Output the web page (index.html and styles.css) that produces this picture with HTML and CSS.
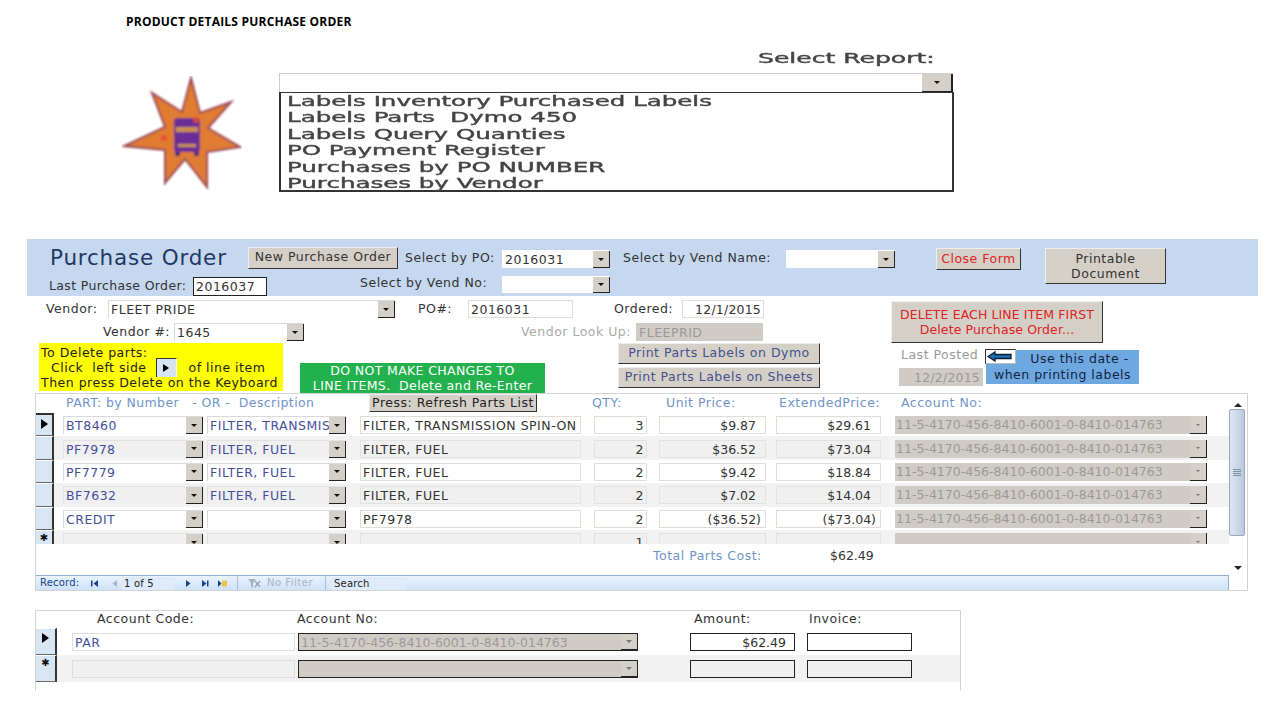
FILE: index.html
```html
<!DOCTYPE html>
<html lang="en">
<head>
<meta charset="utf-8">
<title>Product Details Purchase Order</title>
<link rel="stylesheet" href="styles.css">
</head>
<body>
<div class="page">
  <h1 class="doc-title">PRODUCT DETAILS PURCHASE ORDER</h1>

  <section class="report">
    <svg class="logo" viewBox="122 76 120 114" aria-hidden="true">
      <defs><filter id="soft" x="-10%" y="-10%" width="120%" height="120%"><feGaussianBlur stdDeviation="0.8"/></filter></defs>
      <g filter="url(#soft)">
        <polygon points="191,78 200,113 231,102 208,128 240,147 207,152 207,187 185,159 165,183 165,150 124,146 165,127 152,93 182,112" fill="#e07c30" stroke="#9c4a55" stroke-width="2" stroke-linejoin="miter"/>
        <rect x="174" y="118" width="26" height="34" rx="3" fill="#6a2f96"/>
        <rect x="176" y="127" width="22" height="5" fill="#c9904f"/>
        <rect x="178" y="144" width="18" height="3" fill="#c9904f"/>
        <rect x="175" y="152" width="5" height="4" fill="#4e2a78"/>
        <rect x="194" y="152" width="5" height="4" fill="#4e2a78"/>
        <circle cx="196" cy="120" r="3" fill="#d8483a"/>
        <circle cx="164" cy="138" r="3" fill="#e8503a"/>
      </g>
    </svg>
    <div class="report-box">
      <div class="report-label"><span>Select Report:</span></div>
      <div class="report-combo"><span class="btn"></span></div>
      <ul class="report-list">
        <li>Labels Inventory Purchased Labels</li>
        <li>Labels Parts&nbsp; Dymo 450</li>
        <li>Labels Query Quanties</li>
        <li>PO Payment Register</li>
        <li>Purchases by PO NUMBER</li>
        <li>Purchases by Vendor</li>
      </ul>
    </div>
  </section>

  <section class="band">
    <div class="band-main">
      <div class="band-row1">
        <h2 class="form-title">Purchase Order</h2>
        <button class="cmd new-po">New Purchase Order</button>
        <span class="lbl sel-po">Select by PO:</span>
        <div class="combo w-po plain"><span class="val">2016031</span><span class="btn"></span></div>
        <span class="lbl sel-name">Select by Vend Name:</span>
        <div class="combo w-name plain"><span class="val"></span><span class="btn"></span></div>
        <button class="cmd close-form">Close Form</button>
      </div>
      <div class="band-row2">
        <span class="lbl last-po">Last Purchase Order:</span>
        <div class="field last-po-val">2016037</div>
        <span class="lbl sel-no">Select by Vend No:</span>
        <div class="combo w-po vend-no plain"><span class="val"></span><span class="btn"></span></div>
      </div>
    </div>
    <button class="cmd printable">Printable<br>Document</button>
  </section>

  <section class="details">
    <div class="details-fields">
      <div class="d-row first">
        <span class="lbl l-vendor">Vendor:</span>
        <div class="combo w-vendor"><span class="val">FLEET PRIDE</span><span class="btn"></span></div>
        <span class="lbl l-po">PO#:</span>
        <div class="field w-ponum">2016031</div>
        <span class="lbl l-ordered">Ordered:</span>
        <div class="field w-ordered">12/1/2015</div>
      </div>
      <div class="d-row second">
        <span class="lbl l-vnum">Vendor #:</span>
        <div class="combo w-vnum"><span class="val">1645</span><span class="btn"></span></div>
        <span class="lbl l-look">Vendor Look Up:</span>
        <div class="field w-look">FLEEPRID</div>
      </div>
    </div>
    <button class="cmd delete-po">DELETE EACH LINE ITEM FIRST<br>Delete Purchase Order...</button>
  </section>

  <section class="notices">
    <div class="yellow">
      <div>To Delete parts:</div>
      <div class="y-mid"><span>Click&nbsp; left side</span><span class="sel-sample"><i class="arrow"></i></span><span>of line item</span></div>
      <div>Then press Delete on the Keyboard</div>
    </div>
    <div class="green">DO NOT MAKE CHANGES TO<br>LINE ITEMS.&nbsp; Delete and Re-Enter</div>
    <div class="print-btns">
      <button class="cmd print">Print Parts Labels on Dymo</button>
      <button class="cmd print">Print Parts Labels on Sheets</button>
    </div>
    <div class="posted">
      <div class="posted-col">
        <span class="lbl-gray">Last Posted</span>
        <div class="field posted-date">12/2/2015</div>
      </div>
      <div class="note">
        <div class="note-l1">Use this date -</div>
        <div>when printing labels</div>
        <div class="note-arrow">
          <svg viewBox="0 0 29 13" width="29" height="13" aria-hidden="true"><path d="M2 6.5 9 2V4.5H25V8.5H9V11Z" fill="#1f6fb0" stroke="#0c1d3a" stroke-width="1.3"/></svg>
        </div>
      </div>
    </div>
  </section>

  <section class="sub">
    <div class="sub-main">
      <div class="sub-head">
        <span class="h-part">PART: by Number&nbsp; &nbsp;- OR -&nbsp; Description</span>
        <button class="cmd refresh">Press: Refresh Parts List</button>
        <span class="h-qty">QTY:</span>
        <span class="h-unit">Unit Price:</span>
        <span class="h-ext">ExtendedPrice:</span>
        <span class="h-acct">Account No:</span>
      </div>
      <div class="rows">
        <div class="row">
          <span class="sel"><i class="arrow"></i></span>
          <div class="combo c-part"><span class="val">BT8460</span><span class="btn"></span></div>
          <div class="combo c-desc"><span class="val">FILTER, TRANSMIS</span><span class="btn"></span></div>
          <div class="field c-text">FILTER, TRANSMISSION SPIN-ON</div>
          <div class="field c-qty">3</div>
          <div class="field c-unit">$9.87</div>
          <div class="field c-ext">$29.61</div>
          <div class="combo c-acct"><span class="val">11-5-4170-456-8410-6001-0-8410-014763</span><span class="btn"></span></div>
        </div>
        <div class="row alt">
          <span class="sel"></span>
          <div class="combo c-part"><span class="val">PF7978</span><span class="btn"></span></div>
          <div class="combo c-desc"><span class="val">FILTER, FUEL</span><span class="btn"></span></div>
          <div class="field c-text">FILTER, FUEL</div>
          <div class="field c-qty">2</div>
          <div class="field c-unit">$36.52</div>
          <div class="field c-ext">$73.04</div>
          <div class="combo c-acct"><span class="val">11-5-4170-456-8410-6001-0-8410-014763</span><span class="btn"></span></div>
        </div>
        <div class="row">
          <span class="sel"></span>
          <div class="combo c-part"><span class="val">PF7779</span><span class="btn"></span></div>
          <div class="combo c-desc"><span class="val">FILTER, FUEL</span><span class="btn"></span></div>
          <div class="field c-text">FILTER, FUEL</div>
          <div class="field c-qty">2</div>
          <div class="field c-unit">$9.42</div>
          <div class="field c-ext">$18.84</div>
          <div class="combo c-acct"><span class="val">11-5-4170-456-8410-6001-0-8410-014763</span><span class="btn"></span></div>
        </div>
        <div class="row alt">
          <span class="sel"></span>
          <div class="combo c-part"><span class="val">BF7632</span><span class="btn"></span></div>
          <div class="combo c-desc"><span class="val">FILTER, FUEL</span><span class="btn"></span></div>
          <div class="field c-text">FILTER, FUEL</div>
          <div class="field c-qty">2</div>
          <div class="field c-unit">$7.02</div>
          <div class="field c-ext">$14.04</div>
          <div class="combo c-acct"><span class="val">11-5-4170-456-8410-6001-0-8410-014763</span><span class="btn"></span></div>
        </div>
        <div class="row">
          <span class="sel"></span>
          <div class="combo c-part"><span class="val">CREDIT</span><span class="btn"></span></div>
          <div class="combo c-desc"><span class="val"></span><span class="btn"></span></div>
          <div class="field c-text">PF7978</div>
          <div class="field c-qty">2</div>
          <div class="field c-unit neg">($36.52)</div>
          <div class="field c-ext neg">($73.04)</div>
          <div class="combo c-acct"><span class="val">11-5-4170-456-8410-6001-0-8410-014763</span><span class="btn"></span></div>
        </div>
        <div class="row alt">
          <span class="sel star">✱</span>
          <div class="combo c-part"><span class="val"></span><span class="btn"></span></div>
          <div class="combo c-desc"><span class="val"></span><span class="btn"></span></div>
          <div class="field c-text"></div>
          <div class="field c-qty">1</div>
          <div class="field c-unit"></div>
          <div class="field c-ext"></div>
          <div class="combo c-acct"><span class="val"></span><span class="btn"></span></div>
        </div>
      </div>
      <div class="totals">
        <span class="t-label">Total Parts Cost:</span>
        <span class="t-value">$62.49</span>
      </div>
      <div class="nav">
        <span class="nav-rec">Record:</span>
        <svg class="ni" viewBox="0 0 9 9" width="9" height="9"><path d="M1 1.5H2.5V7.5H1ZM8 1 3.5 4.5 8 8Z" fill="#15428b"/></svg>
        <svg class="ni prev" viewBox="0 0 9 9" width="9" height="9"><path d="M7 1 2.5 4.5 7 8Z" fill="#a9b4c4"/></svg>
        <span class="nav-cur">1 of 5</span>
        <svg class="ni next" viewBox="0 0 9 9" width="9" height="9"><path d="M2 1 6.5 4.5 2 8Z" fill="#15428b"/></svg>
        <svg class="ni last" viewBox="0 0 9 9" width="9" height="9"><path d="M1 1 5.5 4.5 1 8ZM6 1.5H7.5V7.5H6Z" fill="#15428b"/></svg>
        <svg class="ni add" viewBox="0 0 11 9" width="11" height="9"><path d="M1 1 4.5 4.5 1 8Z" fill="#15428b"/><rect x="5" y="1.5" width="5" height="6" fill="#f2c24a"/></svg>
        <span class="nav-sep sep1"></span>
        <svg class="ni funnel" viewBox="0 0 14 11" width="14" height="11"><path d="M1 1H9L6 5V10L4 8.5V5Z" fill="#a8b0bc"/><path d="M8 3 13 9M13 3 8 9" stroke="#9aa6b6" stroke-width="1.5"/></svg>
        <span class="nav-filter">No Filter</span>
        <span class="nav-sep sep2"></span>
        <span class="nav-search">Search</span>
      </div>
    </div>
    <div class="scroll">
      <i class="up"></i>
      <div class="thumb"><b></b></div>
      <i class="down"></i>
    </div>
  </section>

  <section class="acct">
    <div class="acct-head">
      <span class="a-code">Account Code:</span>
      <span class="a-no">Account No:</span>
      <span class="a-amt">Amount:</span>
      <span class="a-inv">Invoice:</span>
    </div>
    <div class="a-row">
      <span class="a-sel"><i class="arrow"></i></span>
      <div class="field a-f-code">PAR</div>
      <div class="combo a-f-no"><span class="val">11-5-4170-456-8410-6001-0-8410-014763</span><span class="btn"></span></div>
      <div class="field a-f-amt">$62.49</div>
      <div class="field a-f-inv"></div>
    </div>
    <div class="a-row alt">
      <span class="a-sel star">✱</span>
      <div class="field a-f-code"></div>
      <div class="combo a-f-no"><span class="val"></span><span class="btn"></span></div>
      <div class="field a-f-amt"></div>
      <div class="field a-f-inv"></div>
    </div>
  </section>
</div>
</body>
</html>
```
FILE: styles.css
```css
* { box-sizing: border-box; }
html, body { margin: 0; padding: 0; background: #fff; }
body { font: 12.5px/1 "DejaVu Sans", "Liberation Sans", sans-serif; letter-spacing: .5px; color: #3a3a3a; overflow: hidden; }
.page { width: 1271px; height: 705px; overflow: hidden; }
h1, h2, ul { margin: 0; padding: 0; }

.doc-title { font: 700 12px/14px "Open Sans", sans-serif; letter-spacing: .22px; color: #000; padding: 15px 0 0 126px; height: 28px; }

.report { display: flex; height: 211px; }
.logo { width: 120px; height: 114px; margin: 48px 0 0 122px; flex: none; }
.report-box { width: 675px; margin-left: 37px; padding-top: 21px; }
.report-label { font: 400 14px/18px "DejaVu Sans", sans-serif; letter-spacing: 0; -webkit-text-stroke: .4px #444; color: #444; text-align: right; padding-right: 19px; height: 24px; }
.report-label span { display: inline-block; transform: scaleX(1.79); transform-origin: right center; }
.report-combo { height: 19px; width: 674px; border-top: 1px solid #ccc; border-left: 1px solid #ccc; display: flex; justify-content: flex-end; }
.report-combo .btn { width: 31px; height: 18px; border-right-width: 2px; }
.report-list { list-style: none; width: 675px; height: 100px; border: 2px solid #333; border-top-width: 1px; padding: 0 0 0 6px; }
.report-list li { font: 400 14px/16.4px "DejaVu Sans", sans-serif; letter-spacing: 0; -webkit-text-stroke: .4px #444; color: #444; white-space: nowrap; transform: scaleX(1.75); transform-origin: left center; }

.lbl { color: #333; white-space: nowrap; }
.btn { flex: none; width: 17px; height: 100%; background: #d4d0c8; border-right: 1px solid #222; border-bottom: 1px solid #222; display: flex; align-items: center; justify-content: center; }
.btn::after { content: ""; border: 3px solid transparent; border-top: 3px solid #111; border-bottom: 0; border-left-width: 3.5px; border-right-width: 3.5px; }
.combo { display: flex; height: 18px; background: #fff; border: 1px solid #d9d9d9; border-right: 0; border-bottom: 0; flex: none; }
.combo.plain { border-color: #fff; }
.val { flex: 1; min-width: 0; padding: 0 0 0 2px; line-height: 18px; color: #333; white-space: nowrap; overflow: hidden; }
.field { flex: none; height: 18px; line-height: 17px; border: 1px solid #e2dcd4; background: #fff; padding: 0 2px; white-space: nowrap; overflow: hidden; color: #333; }
.cmd { flex: none; font: inherit; letter-spacing: inherit; color: #333; background: #d4d0c8; border: 0; border-top: 1px solid #eee; border-left: 1px solid #eee; border-right: 1px solid #333; border-bottom: 1px solid #333; padding: 0; white-space: nowrap; }

.band { margin-left: 27px; width: 1231px; height: 57px; background: #c5d8ef; display: flex; }
.band-main { width: 1018px; flex: none; }
.band-row1 { display: flex; align-items: center; height: 37px; }
.form-title { font: 400 21.5px/24px "DejaVu Sans", sans-serif; letter-spacing: .8px; color: #1f3864; margin: 0 0 0 23px; width: 198px; flex: none; white-space: nowrap; }
.new-po { width: 150px; height: 22px; }
.sel-po { margin: 1px 0 0 7px; width: 97px; }
.w-po { width: 108px; margin: 3px 0 0; }
.sel-name { margin: 2px 0 0 13px; width: 163px; }
.w-name { width: 109px; margin: 3px 0 0; }
.close-form { width: 85px; height: 22px; margin: 3px 0 0 41px; color: #e02020; }
.band-row2 { display: flex; align-items: center; height: 20px; }
.last-po { margin: 0 0 0 22px; width: 144px; letter-spacing: .35px; }
.last-po-val { width: 74px; height: 19px; border: 1px solid #222; line-height: 18px; }
.sel-no { margin: -5px 0 0 93px; width: 142px; }
.vend-no { margin: -3px 0 0; height: 17px; }
.printable { width: 121px; height: 36px; line-height: 15px; margin-top: 9px; }

.details { display: flex; height: 47px; }
.details-fields { width: 891px; flex: none; }
.d-row { display: flex; align-items: center; height: 18px; }
.first { margin-top: 4px; }
.second { margin-top: 5px; }
.l-vendor { margin-left: 46px; width: 62px; }
.w-vendor { width: 287px; }
.l-po { margin-left: 23px; width: 50px; }
.w-ponum { width: 105px; }
.l-ordered { margin-left: 41px; width: 68px; }
.w-ordered { width: 82px; text-align: right; letter-spacing: .2px; }
.l-vnum { margin-left: 103px; width: 71px; }
.w-vnum { width: 130px; }
.l-look { margin-left: 217px; width: 115px; color: #aaa; }
.w-look { width: 127px; background: #d0ccc5; border-color: #d0ccc5; color: #999; }
.delete-po { width: 212px; height: 42px; line-height: 15px; margin-top: 5px; color: #e02020; letter-spacing: .1px; }

.notices { display: flex; height: 50px; }
.yellow { width: 244px; height: 48px; margin-left: 39px; background: #ffff00; color: #222; line-height: 15px; padding: 2px 0 0 2px; flex: none; white-space: nowrap; }
.y-mid { display: flex; align-items: center; padding-left: 10px; height: 15px; }
.sel-sample { width: 21px; height: 19px; margin: 0 12px 0 9px; background: #d8e4f2; border: 1px solid #333; border-bottom: 0; border-right: 1px solid #fff; display: flex; align-items: center; justify-content: center; }
.sel-sample .arrow { border-width: 4px; border-left-width: 6px; border-right-width: 0; }
.green { width: 245px; height: 30px; margin: 20px 0 0 17px; background: #22b14c; color: #fff; text-align: center; line-height: 15px; flex: none; white-space: nowrap; letter-spacing: .35px; }
.print-btns { display: flex; flex-direction: column; gap: 3px; margin-left: 73px; flex: none; }
.print { width: 202px; height: 21px; color: #44508c; }
.posted { display: flex; margin: 6px 0 0 79px; flex: none; }
.posted-col { width: 87px; }
.lbl-gray { display: block; color: #999; margin: 0 0 7px 2px; line-height: 12px; }
.posted-date { width: 84px; background: #d0ccc5; border-color: #d0ccc5; color: #999; text-align: right; letter-spacing: .2px; }
.note { width: 153px; height: 34px; margin: 1px 0 0 0; background: #6fa8e0; color: #11233f; line-height: 16px; padding-top: 1px; text-align: center; position: relative; white-space: nowrap; }
.note-l1 { padding-left: 34px; }
.note-arrow { position: absolute; left: -1px; top: -1px; width: 31px; height: 15px; background: #fff; border: 1px solid #333; border-right-color: #bbb; border-bottom-color: #bbb; display: flex; }

.sub { margin-left: 35px; width: 1213px; height: 198px; border: 1px solid #d4d4d4; display: flex; }
.sub-main { width: 1193px; flex: none; display: flex; flex-direction: column; position: relative; }
.sub-head { height: 18px; flex: none; display: flex; align-items: center; color: #6f94c8; white-space: nowrap; }
.h-part { margin-left: 30px; width: 303px; letter-spacing: .4px; }
.refresh { width: 168px; height: 18px; color: #222; }
.h-qty { margin-left: 55px; width: 74px; }
.h-unit { width: 113px; }
.h-ext { width: 122px; }
.h-acct { width: 100px; }
.rows { height: 131px; margin-top: 1px; overflow: hidden; flex: none; }
.row { height: 23.4px; display: flex; align-items: center; }
.row.alt { background: #f2f2f2; }
.sel, .a-sel { flex: none; align-self: stretch; width: 18px; background: #d8e5f3; border-right: 2px solid #333; border-bottom: 1px solid #666; border-top: 1px solid #fff; display: flex; justify-content: center; padding-top: 4px; }
.row:first-child .sel, .a-row:first-of-type .a-sel { border-top: 2px solid #333; }
.arrow { display: block; width: 0; height: 0; border: 5px solid transparent; border-left: 7px solid #000; border-right: 0; }
.sel.star, .a-sel.star { font: 400 10px/10px "DejaVu Sans", sans-serif; letter-spacing: 0; color: #111; padding-top: 2px; }
.row .combo, .row .field { margin-top: 1px; }
.row .val { color: #434f9c; }
.c-part { width: 140px; margin-left: 9px; }
.c-desc { width: 139px; margin-left: 4px; }
.c-text { width: 221px; margin-left: 14px; }
.c-qty { width: 53px; margin-left: 13px; text-align: right; }
.c-unit { width: 107px; margin-left: 12px; text-align: right; padding-right: 9px; letter-spacing: 0; }
.c-ext { width: 105px; margin-left: 10px; text-align: right; padding-right: 9px; letter-spacing: 0; }
.field.neg { padding-right: 4px; }
.c-acct { width: 312px; margin-left: 14px; border: 0; background: transparent; }
.c-acct .val { background: #d0ccc5; padding-left: 1px; letter-spacing: 0; }
.row .c-acct .val { color: #9a9a9a; }
.c-acct .btn::after { border-top-color: #777; border-left-width: 2.5px; border-right-width: 2.5px; border-top-width: 2.5px; }
.row.alt .field, .row.alt .combo:not(.c-acct) { background: #f0f0f0; border-color: #e2e2e2; }
.totals { flex: 1; display: flex; align-items: center; padding-bottom: 6px; }
.t-label { margin-left: 617px; width: 177px; color: #6f94c8; }
.t-value { color: #333; letter-spacing: 0; }
.nav { height: 15px; flex: none; display: flex; align-items: center; background: linear-gradient(#eaf3fe, #cfe2f8); border-top: 1px solid #8fb0d8; border-right: 1px solid #8fb0d8; font-size: 10px; letter-spacing: .2px; color: #15428b; padding-left: 4px; white-space: nowrap; }
.nav-rec { width: 50px; }
.ni { flex: none; }
.prev { margin-left: 11px; }
.nav-cur { width: 53px; margin-left: 3px; height: 13px; background: #dfeafa; color: #222; line-height: 13px; padding-left: 2px; }
.next { margin-left: 9px; }
.last { margin-left: 8px; }
.add { margin-left: 7px; }
.nav-sep { width: 1px; height: 14px; background: #a9bed8; }
.sep1 { margin-left: 9px; }
.sep2 { margin-left: 5px; }
.funnel { margin-left: 9px; }
.nav-filter { color: #a9b2c0; margin-left: 6px; width: 53px; letter-spacing: .5px; }
.nav-search { width: 75px; height: 13px; background: #dfeafa; color: #222; margin-left: 6px; padding-left: 2px; line-height: 13px; }
.scroll { flex: 1; display: flex; flex-direction: column; align-items: center; width: 18px; background: #fff; }
.up, .down { display: block; width: 0; height: 0; border: 4.5px solid transparent; }
.up { border-bottom: 4px solid #222; border-top: 0; margin-top: 9px; }
.down { border-top: 4px solid #222; border-bottom: 0; margin-top: 30px; }
.thumb { width: 16px; height: 127px; margin: 2px 2px 0 0; border: 1px solid #9aa8bc; border-radius: 2px; background: linear-gradient(90deg, #dfe6f2, #bcc9de); display: flex; align-items: center; justify-content: center; }
.thumb b { width: 8px; height: 7px; background: repeating-linear-gradient(#7d8ea8 0 1px, transparent 1px 2px); }

.acct { margin: 19px 0 0 35px; width: 926px; height: 81px; border: 1px solid #d4d4d4; border-bottom: 0; }
.acct-head { height: 17px; display: flex; align-items: center; color: #333; white-space: nowrap; }
.a-code { margin-left: 61px; width: 200px; }
.a-no { width: 397px; }
.a-amt { width: 115px; }
.a-inv { width: 100px; }
.a-row { height: 27px; display: flex; align-items: center; }
.a-row.alt { background: #f2f2f2; }
.a-sel { width: 21px; }
.a-f-code { width: 223px; height: 18px; margin-left: 15px; border-color: #ddd; color: #434f9c; }
.a-f-no { width: 340px; height: 18px; margin-left: 3px; border: 1px solid #222; border-right: 0; background: #d0ccc5; }
.a-f-no .val { background: #d0ccc5; color: #999; letter-spacing: 0; }
.a-f-no .btn::after { border-top-color: #777; }
.a-f-amt { width: 105px; height: 18px; margin-left: 52px; border-color: #222; text-align: right; padding-right: 8px; letter-spacing: 0; }
.a-f-inv { width: 105px; height: 18px; margin-left: 12px; border-color: #222; }
.alt .a-f-code, .alt .a-f-amt, .alt .a-f-inv { background: #f0f0f0; }
```
